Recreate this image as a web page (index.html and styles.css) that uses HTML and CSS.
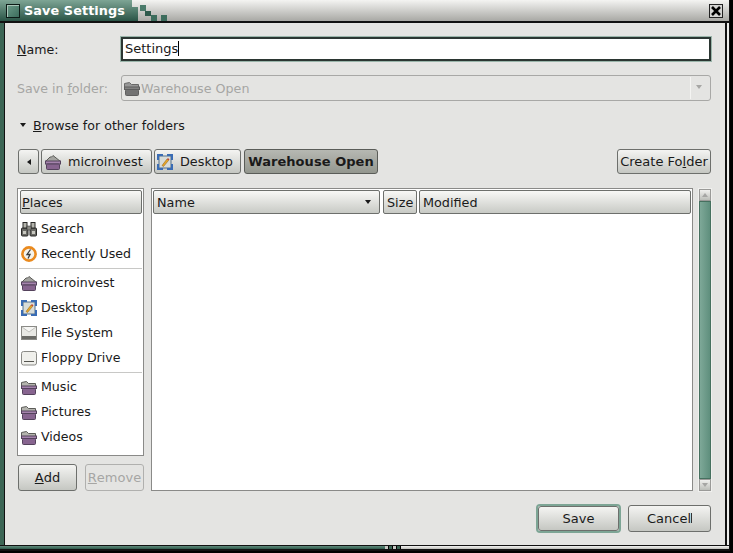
FILE: index.html
```html
<!DOCTYPE html>
<html lang="en">
<head>
    <meta charset="UTF-8">
    <meta name="viewport" content="width=device-width, initial-scale=1.0">
    <title>Save Settings</title>
    <link rel="stylesheet" href="styles.css">
</head>
<body>

<svg class="defs" width="0" height="0">
    <defs>
        <symbol id="home" viewBox="0 0 16 16">
            <path d="M.5 7.500 L5 3 L6.500 3 L8 1.500 L15.500 7.500 Z" fill="#a4a4a0" stroke="#5c5c58"/>
            <rect x=".5" y="7" width="15" height="3" fill="#a583ad" stroke="#54425c"/>
            <rect x="1.500" y="10" width="13" height="5.500" rx="1" fill="#87648f" stroke="#54425c"/>
        </symbol>
        <symbol id="folder" viewBox="0 0 16 16">
            <path d="M.5 7 V3.500 L5.500 2.500 L7.500 4.500 L14.500 4.500 V7" fill="#b4b4ae" stroke="#5c5c58"/>
            <rect x=".5" y="7" width="15" height="2.500" fill="#a583ad" stroke="#54425c"/>
            <rect x="1.500" y="9.500" width="13" height="6" rx="1" fill="#87648f" stroke="#54425c"/>
        </symbol>
        <symbol id="desktop" viewBox="0 0 16 16">
            <rect x="2" y="2" width="12" height="12" fill="#d8dcd8" stroke="#55708c"/>
            <path d="M1 6 V1 H6 M10 1 H15 V6 M15 10 V15 H10 M6 15 H1 V10" fill="none" stroke="#3a6cb4" stroke-width="2"/>
            <path d="M5 11.500 L10 5 L11.500 6.500 L6.500 12.500 Z" fill="#e8a828" stroke="#8a5a10" stroke-width=".5"/>
            <path d="M10 5 L11 4 L12.500 5.500 L11.500 6.500 Z" fill="#c84830"/>
        </symbol>
        <symbol id="search" viewBox="0 0 16 16">
            <rect x=".5" y="7" width="6.500" height="8" rx="1" fill="#6a6a66" stroke="#2a2a28"/>
            <rect x="9" y="7" width="6.500" height="8" rx="1" fill="#6a6a66" stroke="#2a2a28"/>
            <rect x="2" y="1.500" width="4" height="5.500" fill="#b4b4ac" stroke="#2a2a28"/>
            <rect x="10" y="1.500" width="4" height="5.500" fill="#b4b4ac" stroke="#2a2a28"/>
            <rect x="6" y="5" width="4" height="4" fill="#8a8a84" stroke="#2a2a28" stroke-width=".5"/>
            <rect x="2" y="10" width="3" height="3" fill="#c8c8c0"/>
            <rect x="11" y="10" width="3" height="3" fill="#c8c8c0"/>
        </symbol>
        <symbol id="recent" viewBox="0 0 16 16">
            <circle cx="8" cy="8" r="6.600" fill="#f4f3ec" stroke="#ea8a1e" stroke-width="2.600"/>
            <path d="M9.500 3.500 L6 8.500 L9 8.500 L7 12.500" fill="none" stroke="#3a3a3a" stroke-width="1.300"/>
        </symbol>
        <symbol id="harddisk" viewBox="0 0 16 16">
            <rect x=".5" y="1.500" width="15" height="13" fill="#e8e8e4" stroke="#8a8a86"/>
            <path d="M1 2 L8 7 L15 2" fill="#f6f6f4" stroke="#c0c0bc"/>
            <rect x="1" y="11" width="14" height="3" fill="#6a6a66"/>
        </symbol>
        <symbol id="floppy" viewBox="0 0 16 16">
            <rect x=".5" y="1.500" width="15" height="13.500" rx="2" fill="#f0f0ec" stroke="#8a8a86"/>
            <rect x="3" y="11" width="10" height="1" fill="#55554f"/>
        </symbol>
    </defs>
</svg>

<div class="window">
    <div class="titlebar">
        <span class="title-icon"></span>
        <span class="title-tab">Save Settings</span>
        <span class="title-steps">
            <i></i><i></i><i></i><i></i><i></i>
        </span>
        <span class="title-fill"></span>
        <span class="close-btn">
            <svg width="10" height="10" viewBox="0 0 10 10"><path d="M1 1 L9 9 M9 1 L1 9" stroke="#000" stroke-width="2.600"/></svg>
        </span>
    </div>

    <div class="frame">
        <div class="dialog">
            <div class="form-row">
                <label class="form-label"><u>N</u>ame:</label>
                <div class="name-input">Settings<span class="caret"></span></div>
            </div>

            <div class="form-row folder-row">
                <label class="form-label disabled">Save in <u>f</u>older:</label>
                <div class="combo">
                    <svg class="icon faded"><use href="#folder"/></svg>
                    <span class="combo-text">Warehouse Open</span>
                    <span class="combo-arrow"></span>
                </div>
            </div>

            <div class="expander"><span class="arrow-down"></span><span><u>B</u>rowse for other folders</span></div>

            <div class="path-bar">
                <button class="btn path-back"><span class="arrow-left"></span></button>
                <button class="btn path-btn path-home"><svg class="icon"><use href="#home"/></svg>microinvest</button>
                <button class="btn path-btn path-desktop"><svg class="icon"><use href="#desktop"/></svg>Desktop</button>
                <button class="btn path-current">Warehouse Open</button>
                <button class="btn create-folder">Create Fo<u>l</u>der</button>
            </div>

            <div class="browser">
                <div class="sidebar">
                    <div class="places">
                        <div class="col-head places-head"><u>P</u>laces</div>
                        <div class="place first"><svg class="icon"><use href="#search"/></svg>Search</div>
                        <div class="place"><svg class="icon"><use href="#recent"/></svg>Recently Used</div>
                        <div class="sep"></div>
                        <div class="place"><svg class="icon"><use href="#home"/></svg>microinvest</div>
                        <div class="place"><svg class="icon"><use href="#desktop"/></svg>Desktop</div>
                        <div class="place"><svg class="icon"><use href="#harddisk"/></svg>File System</div>
                        <div class="place"><svg class="icon"><use href="#floppy"/></svg>Floppy Drive</div>
                        <div class="sep"></div>
                        <div class="place"><svg class="icon"><use href="#folder"/></svg>Music</div>
                        <div class="place"><svg class="icon"><use href="#folder"/></svg>Pictures</div>
                        <div class="place"><svg class="icon"><use href="#folder"/></svg>Videos</div>
                    </div>
                    <div class="side-buttons">
                        <button class="btn side-btn"><u>A</u>dd</button>
                        <button class="btn side-btn off"><u>R</u>emove</button>
                    </div>
                </div>

                <div class="files">
                    <div class="file-list">
                        <div class="file-head">
                            <div class="col-head col-name">Name<span class="sort-arrow"></span></div>
                            <div class="col-head col-size">Size</div>
                            <div class="col-head col-mod">Modified</div>
                        </div>
                    </div>
                    <div class="scrollbar">
                        <div class="stepper"><span class="step-up"></span></div>
                        <div class="thumb"></div>
                        <div class="stepper"><span class="step-down"></span></div>
                    </div>
                </div>
            </div>

            <div class="actions">
                <div class="focus-ring"><button class="btn save-btn">Save</button></div>
                <button class="btn cancel-btn">Cancel<span class="pointer"></span></button>
            </div>
        </div>
    </div>

    <div class="bottom-border">
        <span class="band-green"></span>
        <span class="grip"><i></i><i></i><i></i><i></i></span>
        <span class="band-light"></span>
    </div>
</div>

</body>
</html>
```

FILE: styles.css
```css
* {
    box-sizing: border-box;
}

html, body {
    margin: 0;
    padding: 0;
    background-color: #000;
}

body {
    width: 733px;
    height: 553px;
    overflow: hidden;
    font-family: "DejaVu Sans", sans-serif;
    font-size: 13px;
    color: #1a1a1a;
}

.defs {
    position: absolute;
}

.window {
    width: 730px;
    height: 551px;
    display: flex;
    flex-direction: column;
    border-right: 1px solid #111;
}

/* title bar */
.titlebar {
    height: 23px;
    flex: none;
    display: flex;
    background: linear-gradient(#f4f4f2, #a8a8a4);
    border-bottom: 2px solid #111;
    position: relative;
}

.title-icon {
    width: 14px;
    height: 14px;
    position: absolute;
    left: 6px;
    top: 4px;
    background: linear-gradient(135deg, #6a9a88, #3c6c5c);
    border: 1px solid #0c1a16;
    box-shadow: inset 1px 1px 0 #a8c4b8;
}

.title-tab {
    width: 132px;
    flex: none;
    padding-left: 24px;
    background: linear-gradient(#7ea595, #2a5446);
    color: #fff;
    font-weight: bold;
    font-size: 12.8px;
    letter-spacing: .1px;
    line-height: 22px;
}

.title-steps {
    width: 38px;
    flex: none;
    position: relative;
}

.title-steps i {
    position: absolute;
    width: 6px;
    height: 6px;
    background-color: #3c6c5c;
}

.title-steps i:nth-child(1) { left: 0; top: 7px; width: 6px; height: 14px; background: linear-gradient(#5f8a7a, #2a5446); }
.title-steps i:nth-child(2) { left: 8px; top: 5px; background-color: #4a7a6a; }
.title-steps i:nth-child(3) { left: 13px; top: 11px; height: 5px; background-color: #2f5a4c; }
.title-steps i:nth-child(4) { left: 19px; top: 15px; background-color: #3c6c5c; }
.title-steps i:nth-child(5) { left: 29px; top: 15px; background-color: #3c6c5c; }

.title-fill {
    flex: 1;
}

.close-btn {
    width: 14px;
    height: 14px;
    margin: 4px 6px 0 0;
    border: 1px solid #222;
    background-color: #d4d4d2;
    display: flex;
    align-items: center;
    justify-content: center;
}

/* frame round the dialog */
.frame {
    flex: 1;
    min-height: 0;
    display: flex;
    border-left: 4px solid #3c6655;
    border-right: 2px solid #eeeeec;
}

.dialog {
    flex: 1;
    min-width: 0;
    background-color: #e4e4e2;
    border-left: 1px solid #111;
    border-right: 2px solid #111;
    padding: 14px 13px 0 12px;
    display: flex;
    flex-direction: column;
}

.form-row {
    display: flex;
    align-items: center;
}

.form-label {
    width: 104px;
    flex: none;
    font-size: 12.6px;
}

.disabled {
    color: #a6a6a4;
}

.name-input {
    width: 590px;
    height: 24px;
    background-color: #fff;
    border: 2px solid #2b3632;
    outline: 1px solid #9ab5aa;
    padding-left: 2px;
    line-height: 20px;
}

.caret {
    display: inline-block;
    width: 1px;
    height: 15px;
    background-color: #000;
    vertical-align: -3px;
}

.folder-row {
    margin-top: 14px;
}

.combo {
    width: 590px;
    height: 26px;
    border: 1px solid #a8a8a6;
    border-radius: 3px;
    display: flex;
    align-items: center;
    padding-left: 2px;
    font-size: 12.7px;
    color: #a6a6a4;
}

.combo-text {
    flex: 1;
    margin-left: 1px;
}

.combo-arrow {
    width: 20px;
    height: 22px;
    border-left: 1px solid #f4f4f2;
    position: relative;
}

.combo-arrow::after {
    content: "";
    position: absolute;
    left: 5px;
    top: 8px;
    border-left: 3px solid transparent;
    border-right: 3px solid transparent;
    border-top: 4px solid #a6a6a4;
}

.icon {
    width: 16px;
    height: 16px;
    flex: none;
}

.faded {
    filter: grayscale(1) brightness(.7);
    opacity: .75;
}

.expander {
    margin-top: 15px;
    height: 18px;
    display: flex;
    align-items: center;
    gap: 7px;
    padding-left: 3px;
    font-size: 12.6px;
}

.arrow-down {
    border-left: 3.500px solid transparent;
    border-right: 3.500px solid transparent;
    border-top: 4px solid #1a1a1a;
}

/* path buttons */
.path-bar {
    margin: 15px 1px 0;
    display: flex;
    height: 25px;
}

.btn {
    font: inherit;
    color: inherit;
    height: 25px;
    padding: 0;
    border: 1px solid #6d6f6c;
    border-radius: 3px;
    background: linear-gradient(#f4f4f2, #c5c7c2);
    display: flex;
    align-items: center;
    justify-content: center;
}

.path-back {
    width: 21px;
}

.arrow-left {
    border-top: 3px solid transparent;
    border-bottom: 3px solid transparent;
    border-right: 4px solid #1a1a1a;
}

.path-btn {
    justify-content: flex-start;
    gap: 7px;
    font-size: 12.8px;
}

.path-home {
    width: 111px;
    margin-left: 2px;
    padding-left: 3px;
}

.path-desktop {
    width: 87px;
    margin-left: 2px;
    padding-left: 2px;
}

.path-current {
    width: 134px;
    margin-left: 3px;
    font-weight: bold;
    letter-spacing: .05px;
    background: linear-gradient(#b6b8b2, #94978f);
    border-color: #5a5c58;
}

.create-folder {
    width: 94px;
    margin-left: auto;
}

/* places + file list */
.browser {
    margin-top: 14px;
    flex: none;
    height: 304px;
    display: flex;
    gap: 7px;
}

.sidebar {
    width: 127px;
    flex: none;
    display: flex;
    flex-direction: column;
}

.places {
    height: 268px;
    background-color: #fff;
    border: 1px solid #8a8a88;
    padding: 1px 1px 1px 2px;
    font-size: 12.6px;
}

.col-head {
    height: 24px;
    flex: none;
    border: 1px solid #6d6f6c;
    border-radius: 2px;
    background: linear-gradient(#f8f8f6, #c8cac5);
    line-height: 24px;
    font-size: 12.8px;
    padding-left: 3px;
}

.places-head {
    padding-left: 1px;
}

.place {
    display: flex;
    align-items: center;
    gap: 4px;
    height: 25px;
    padding-left: 1px;
}

.place.first {
    margin-top: 2px;
}

.sep {
    height: 1px;
    margin: 2px 0 1px -1px;
    background-color: #c8c8c6;
}

.side-buttons {
    margin: 8px 0 0 1px;
    display: flex;
    justify-content: space-between;
}

.side-btn {
    width: 59px;
    height: 27px;
}

.off {
    color: #a6a6a4;
    background: #e4e4e2;
    border-color: #b0b0ae;
}

.files {
    flex: 1;
    display: flex;
    gap: 5px;
    min-width: 0;
}

.file-list {
    flex: 1;
    height: 303px;
    background-color: #fff;
    border: 1px solid #8a8a88;
    padding: 1px;
}

.file-head {
    display: flex;
}

.col-name {
    width: 227px;
    position: relative;
}

.sort-arrow {
    position: absolute;
    right: 8px;
    top: 9px;
    border-left: 3px solid transparent;
    border-right: 3px solid transparent;
    border-top: 4px solid #1a1a1a;
}

.col-size {
    width: 34px;
    margin: 0 2px 0 3px;
}

.col-mod {
    flex: 1;
}

.scrollbar {
    width: 14px;
    height: 304px;
    flex: none;
    display: flex;
    flex-direction: column;
    background-color: #f0f0ee;
    padding: 1px;
}

.stepper {
    height: 12px;
    flex: none;
    background: linear-gradient(#f0f0ee, #bcbeb9);
    border: 1px solid #9a9a98;
    display: flex;
    align-items: center;
    justify-content: center;
}

.step-up {
    border-left: 3px solid transparent;
    border-right: 3px solid transparent;
    border-bottom: 4px solid #a6a6a4;
}

.step-down {
    border-left: 3px solid transparent;
    border-right: 3px solid transparent;
    border-top: 4px solid #a6a6a4;
}

.thumb {
    flex: 1;
    background: linear-gradient(90deg, #7ea898, #5f8f7d);
    border: 1px solid #46705f;
}

/* bottom buttons */
.actions {
    margin: 12px 1px 0 0;
    display: flex;
    justify-content: flex-end;
    align-items: center;
    gap: 7px;
}

.focus-ring {
    border: 2px solid #7da595;
    border-radius: 4px;
}

.save-btn {
    width: 81px;
}

.cancel-btn {
    width: 83px;
    height: 27px;
}

.pointer {
    width: 1px;
    height: 10px;
    margin-top: -1px;
    background-color: #333;
}

.bottom-border {
    height: 6px;
    flex: none;
    display: flex;
    border-top: 1px solid #111;
    border-bottom: 2px solid #111;
}

.band-green {
    width: 385px;
    background: linear-gradient(#5f8a7a, #2f5a4c);
}

.grip {
    width: 16px;
    display: flex;
    gap: 1px;
}

.grip i {
    width: 3px;
    background-color: #c8c8c4;
}

.grip i:nth-child(even) {
    background-color: #3c6655;
}

.band-light {
    flex: 1;
    background: linear-gradient(#f4f4f2, #bcbcb8);
}
```
